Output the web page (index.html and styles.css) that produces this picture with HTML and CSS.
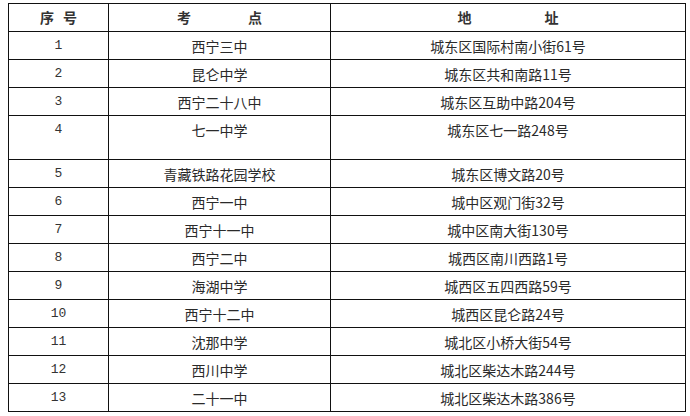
FILE: index.html
```html
<!DOCTYPE html>
<html lang="zh-CN">
<head>
<meta charset="utf-8">
<link rel="stylesheet" href="styles.css">
</head>
<body>
<table class="sites">
  <colgroup>
    <col class="c-no">
    <col class="c-name">
    <col class="c-addr">
  </colgroup>
  <thead>
    <tr>
      <th>序<span class="gap-s"></span>号</th>
      <th>考<span class="gap-a"></span>点</th>
      <th>地<span class="gap-b"></span>址</th>
    </tr>
  </thead>
  <tbody>
    <tr><td class="num">1</td><td>西宁三中</td><td>城东区国际村南小街61号</td></tr>
    <tr><td class="num">2</td><td>昆仑中学</td><td>城东区共和南路11号</td></tr>
    <tr><td class="num">3</td><td>西宁二十八中</td><td>城东区互助中路204号</td></tr>
    <tr class="tall"><td class="num">4</td><td>七一中学</td><td>城东区七一路248号</td></tr>
    <tr><td class="num">5</td><td>青藏铁路花园学校</td><td>城东区博文路20号</td></tr>
    <tr><td class="num">6</td><td>西宁一中</td><td>城中区观门街32号</td></tr>
    <tr><td class="num">7</td><td>西宁十一中</td><td>城中区南大街130号</td></tr>
    <tr><td class="num">8</td><td>西宁二中</td><td>城西区南川西路1号</td></tr>
    <tr><td class="num">9</td><td>海湖中学</td><td>城西区五四西路59号</td></tr>
    <tr><td class="num">10</td><td>西宁十二中</td><td>城西区昆仑路24号</td></tr>
    <tr><td class="num">11</td><td>沈那中学</td><td>城北区小桥大街54号</td></tr>
    <tr><td class="num">12</td><td>西川中学</td><td>城北区柴达木路244号</td></tr>
    <tr><td class="num">13</td><td>二十一中</td><td>城北区柴达木路386号</td></tr>
  </tbody>
</table>
</body>
</html>
```

FILE: styles.css
```css
html, body {
  margin: 0;
  padding: 0;
  background: #fff;
}

body {
  padding: 3px 0 0 8px;
  font-family: "Noto Sans CJK SC", "Noto Sans", sans-serif;
  font-size: 14px;
  color: #2a2a2a;
}

.sites {
  border-collapse: collapse;
  table-layout: fixed;
  width: 677px;
}

.c-no { width: 100px; }
.c-name { width: 222px; }
.c-addr { width: 355px; }

.sites th,
.sites td {
  border: 1px solid #111;
  padding: 5px 0 0 0;
  height: 22px;
  text-align: center;
  vertical-align: top;
  line-height: 18px;
  white-space: nowrap;
}

.sites th {
  font-weight: bold;
  color: #333;
  padding-top: 4px;
  height: 23px;
}

.sites tr.tall td {
  height: 38px;
}

.num {
  font-family: "Liberation Mono", "DejaVu Sans Mono", monospace;
  font-size: 13px;
  color: #333;
}

.gap-s {
  display: inline-block;
  width: 9px;
}

.gap-a {
  display: inline-block;
  width: 57px;
}

.gap-b {
  display: inline-block;
  width: 73px;
}
```
